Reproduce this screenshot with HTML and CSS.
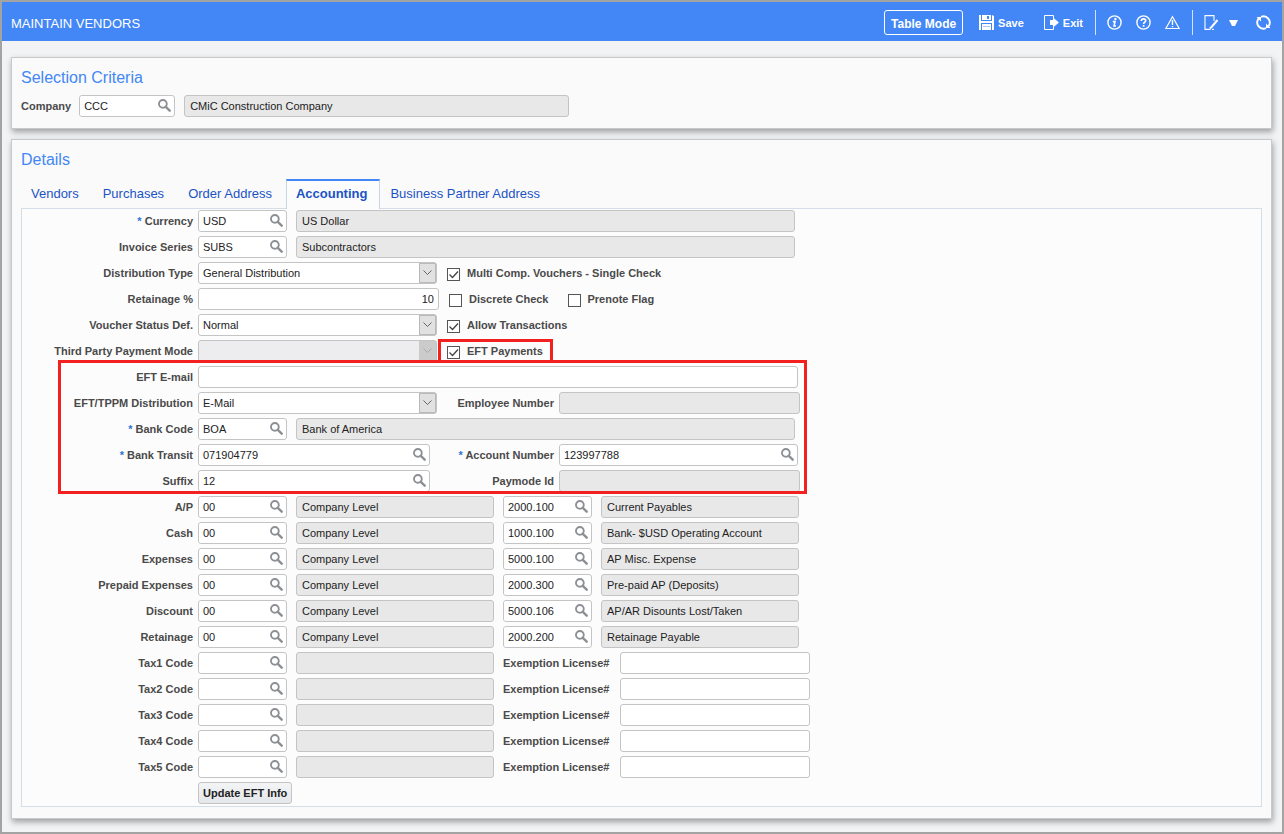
FILE: index.html
```html
<!DOCTYPE html>
<html lang="en">
<head>
    <meta charset="UTF-8">
    <meta name="viewport" content="width=device-width, initial-scale=1.0">
    <title>Maintain Vendors</title>
    <link rel="stylesheet" href="styles.css">
</head>
<body>

<!-- Shared icon -->
<svg class="icon-defs" width="0" height="0" aria-hidden="true">
    <symbol id="icon-search" viewBox="0 0 12 12">
        <circle cx="4.5" cy="4.5" r="3.6" fill="none" stroke="#8c9095" stroke-width="1.7"/>
        <path d="M7.2 7.2L10.8 10.8" stroke="#8c9095" stroke-width="2.2" stroke-linecap="round"/>
    </symbol>
</svg>

<header class="app-header">
    <h1>MAINTAIN VENDORS</h1>
    <div class="toolbar">
        <button type="button" class="table-mode">Table Mode</button>
        <button type="button" class="tool save">
            <svg width="15" height="15" viewBox="0 0 15 15"><path d="M0 0H2V6H13V0L15 1V15H0Z" fill="#fff"/><path d="M3 0H12V5H3Z" fill="#fff"/><path d="M8 1H10V4H8Z" fill="#4287f5"/><path d="M2 8H13V9H2Z M2 8H3V15H2Z M12 8H13V15H12Z" fill="#4287f5"/><path d="M4 11.5H11" stroke="#a9c8fb"/></svg>
            Save
        </button>
        <button type="button" class="tool exit">
            <svg width="15" height="15" viewBox="0 0 15 15"><path d="M9.5 3V.5H.5V14.5H9.5V12" fill="none" stroke="#fff"/><path d="M6 5H9V2.5L15 7.5L9 12.500V10H6Z" fill="#fff"/></svg>
            Exit
        </button>
        <span class="divider"></span>
        <button type="button" class="tool" aria-label="Information">
            <svg width="15" height="15" viewBox="0 0 15 15"><circle cx="7.5" cy="7.5" r="6.6" fill="none" stroke="#fff" stroke-width="1.4"/><circle cx="8.4" cy="4" r="1.200" fill="#fff"/><path d="M5.8 6.600H8L7 11H9" fill="none" stroke="#fff" stroke-width="1.6"/></svg>
        </button>
        <button type="button" class="tool" aria-label="Help">
            <svg width="15" height="15" viewBox="0 0 15 15"><circle cx="7.5" cy="7.5" r="6.6" fill="none" stroke="#fff" stroke-width="1.4"/><path d="M5.3 6C5.3 3.2 9.7 3.2 9.7 5.7C9.7 7.2 7.6 7.2 7.6 9" fill="none" stroke="#fff" stroke-width="1.7"/><path d="M6.700 10H8.500V11.700H6.700Z" fill="#fff"/></svg>
        </button>
        <button type="button" class="tool" aria-label="Warnings">
            <svg width="15" height="15" viewBox="0 0 15 15"><path d="M7.5 1.8L14.2 13.5H.8Z" fill="none" stroke="#fff" stroke-width="1.2"/><path d="M7.5 5V10M7.5 11V12.3" stroke="#fff" stroke-width="1.4"/></svg>
        </button>
        <span class="divider"></span>
        <button type="button" class="tool" aria-label="Edit">
            <svg width="15" height="15" viewBox="0 0 15 15"><path d="M10 6V.6H1V14.400H6.500" fill="none" stroke="#fff" stroke-width="1.1"/><path d="M13.500 5L8 11.5L6 13.5" fill="none" stroke="#fff" stroke-width="2"/><path d="M8 14.400H10" stroke="#fff"/></svg>
        </button>
        <button type="button" class="tool caret" aria-label="More">
            <svg width="9" height="15" viewBox="0 0 9 15"><path d="M0 5H9L6 11H3Z" fill="#fff"/></svg>
        </button>
        <button type="button" class="tool refresh" aria-label="Refresh">
            <svg width="15" height="15" viewBox="0 0 15 15"><path d="M5 1.9A6.200 6.200 0 0 1 12.600 11.100M10 13.100A6.200 6.200 0 0 1 2.400 3.900" fill="none" stroke="#fff" stroke-width="1.900"/><path d="M.5 2H5V6.500Z M14.500 13H10V8.500Z" fill="#fff"/></svg>
        </button>
    </div>
</header>

<main>
    <section class="panel">
        <h2>Selection Criteria</h2>
        <div class="criteria">
            <label for="company">Company</label>
            <div class="group">
                <span class="lookup company"><input type="text" id="company" value="CCC"><button type="button" aria-label="Find company"><svg><use href="#icon-search"/></svg></button></span>
                <input type="text" class="company-name" value="CMiC Construction Company" aria-label="Company name" readonly>
            </div>
        </div>
    </section>

    <section class="panel">
        <h2>Details</h2>
        <nav class="tabs">
            <a href="#vendors">Vendors</a>
            <a href="#purchases">Purchases</a>
            <a href="#order-address">Order Address</a>
            <a href="#accounting" class="active">Accounting</a>
            <a href="#partner-address">Business Partner Address</a>
        </nav>
        <form class="tab-content" id="accounting">
            <div class="row">
                <label for="currency"><span class="required">*</span> Currency</label>
                <div class="group">
                    <span class="lookup"><input type="text" id="currency" value="USD"><button type="button" aria-label="Find currency"><svg><use href="#icon-search"/></svg></button></span>
                    <input type="text" class="wide" value="US Dollar" aria-label="Currency name" readonly>
                </div>
            </div>
            <div class="row">
                <label for="invoice-series">Invoice Series</label>
                <div class="group">
                    <span class="lookup"><input type="text" id="invoice-series" value="SUBS"><button type="button" aria-label="Find invoice series"><svg><use href="#icon-search"/></svg></button></span>
                    <input type="text" class="wide" value="Subcontractors" aria-label="Invoice series name" readonly>
                </div>
            </div>
            <div class="row">
                <label for="distribution-type">Distribution Type</label>
                <div class="group">
                    <select id="distribution-type"><option>General Distribution</option></select>
                    <label class="check"><input type="checkbox" checked> Multi Comp. Vouchers - Single Check</label>
                </div>
            </div>
            <div class="row">
                <label for="retainage-pct">Retainage %</label>
                <div class="group">
                    <input type="text" id="retainage-pct" class="medium number" value="10">
                    <label class="check"><input type="checkbox"> Discrete Check</label>
                    <label class="check"><input type="checkbox"> Prenote Flag</label>
                </div>
            </div>
            <div class="row">
                <label for="voucher-status">Voucher Status Def.</label>
                <div class="group">
                    <select id="voucher-status"><option>Normal</option></select>
                    <label class="check"><input type="checkbox" checked> Allow Transactions</label>
                </div>
            </div>
            <div class="row">
                <label for="payment-mode">Third Party Payment Mode</label>
                <div class="group">
                    <select id="payment-mode" disabled><option></option></select>
                    <label class="check highlighted"><input type="checkbox" checked> EFT Payments</label>
                </div>
            </div>

            <!-- EFT fields -->
            <div class="eft-fields">
                <div class="row">
                    <label for="eft-email">EFT E-mail</label>
                    <input type="text" id="eft-email" class="email">
                </div>
                <div class="row">
                    <label for="eft-distribution">EFT/TPPM Distribution</label>
                    <div class="first-field"><select id="eft-distribution"><option>E-Mail</option></select></div>
                    <label for="employee-number" class="second">Employee Number</label>
                    <input type="text" id="employee-number" class="medium" readonly>
                </div>
                <div class="row">
                    <label for="bank-code"><span class="required">*</span> Bank Code</label>
                    <div class="group">
                        <span class="lookup"><input type="text" id="bank-code" value="BOA"><button type="button" aria-label="Find bank"><svg><use href="#icon-search"/></svg></button></span>
                        <input type="text" class="wide" value="Bank of America" aria-label="Bank name" readonly>
                    </div>
                </div>
                <div class="row">
                    <label for="bank-transit"><span class="required">*</span> Bank Transit</label>
                    <div class="first-field"><span class="lookup transit"><input type="text" id="bank-transit" value="071904779"><button type="button" aria-label="Find bank transit"><svg><use href="#icon-search"/></svg></button></span></div>
                    <label for="account-number" class="second"><span class="required">*</span> Account Number</label>
                    <span class="lookup account"><input type="text" id="account-number" value="123997788"><button type="button" aria-label="Find account number"><svg><use href="#icon-search"/></svg></button></span>
                </div>
                <div class="row">
                    <label for="suffix">Suffix</label>
                    <div class="first-field"><span class="lookup transit"><input type="text" id="suffix" value="12"><button type="button" aria-label="Find suffix"><svg><use href="#icon-search"/></svg></button></span></div>
                    <label for="paymode-id" class="second">Paymode Id</label>
                    <input type="text" id="paymode-id" class="medium" readonly>
                </div>
            </div>

            <!-- G/L accounts -->
            <div class="row">
                <label for="ap">A/P</label>
                <div class="group">
                    <span class="lookup"><input type="text" id="ap" value="00"><button type="button" aria-label="Find A/P level"><svg><use href="#icon-search"/></svg></button></span>
                    <input type="text" class="name" value="Company Level" aria-label="A/P level" readonly>
                    <span class="lookup"><input type="text" value="2000.100" aria-label="A/P account"><button type="button" aria-label="Find A/P account"><svg><use href="#icon-search"/></svg></button></span>
                    <input type="text" class="name" value="Current Payables" aria-label="A/P account name" readonly>
                </div>
            </div>
            <div class="row">
                <label for="cash">Cash</label>
                <div class="group">
                    <span class="lookup"><input type="text" id="cash" value="00"><button type="button" aria-label="Find cash level"><svg><use href="#icon-search"/></svg></button></span>
                    <input type="text" class="name" value="Company Level" aria-label="Cash level" readonly>
                    <span class="lookup"><input type="text" value="1000.100" aria-label="Cash account"><button type="button" aria-label="Find cash account"><svg><use href="#icon-search"/></svg></button></span>
                    <input type="text" class="name" value="Bank- $USD Operating Account" aria-label="Cash account name" readonly>
                </div>
            </div>
            <div class="row">
                <label for="expenses">Expenses</label>
                <div class="group">
                    <span class="lookup"><input type="text" id="expenses" value="00"><button type="button" aria-label="Find expenses level"><svg><use href="#icon-search"/></svg></button></span>
                    <input type="text" class="name" value="Company Level" aria-label="Expenses level" readonly>
                    <span class="lookup"><input type="text" value="5000.100" aria-label="Expenses account"><button type="button" aria-label="Find expenses account"><svg><use href="#icon-search"/></svg></button></span>
                    <input type="text" class="name" value="AP Misc. Expense" aria-label="Expenses account name" readonly>
                </div>
            </div>
            <div class="row">
                <label for="prepaid">Prepaid Expenses</label>
                <div class="group">
                    <span class="lookup"><input type="text" id="prepaid" value="00"><button type="button" aria-label="Find prepaid level"><svg><use href="#icon-search"/></svg></button></span>
                    <input type="text" class="name" value="Company Level" aria-label="Prepaid level" readonly>
                    <span class="lookup"><input type="text" value="2000.300" aria-label="Prepaid account"><button type="button" aria-label="Find prepaid account"><svg><use href="#icon-search"/></svg></button></span>
                    <input type="text" class="name" value="Pre-paid AP (Deposits)" aria-label="Prepaid account name" readonly>
                </div>
            </div>
            <div class="row">
                <label for="discount">Discount</label>
                <div class="group">
                    <span class="lookup"><input type="text" id="discount" value="00"><button type="button" aria-label="Find discount level"><svg><use href="#icon-search"/></svg></button></span>
                    <input type="text" class="name" value="Company Level" aria-label="Discount level" readonly>
                    <span class="lookup"><input type="text" value="5000.106" aria-label="Discount account"><button type="button" aria-label="Find discount account"><svg><use href="#icon-search"/></svg></button></span>
                    <input type="text" class="name" value="AP/AR Disounts Lost/Taken" aria-label="Discount account name" readonly>
                </div>
            </div>
            <div class="row">
                <label for="retainage">Retainage</label>
                <div class="group">
                    <span class="lookup"><input type="text" id="retainage" value="00"><button type="button" aria-label="Find retainage level"><svg><use href="#icon-search"/></svg></button></span>
                    <input type="text" class="name" value="Company Level" aria-label="Retainage level" readonly>
                    <span class="lookup"><input type="text" value="2000.200" aria-label="Retainage account"><button type="button" aria-label="Find retainage account"><svg><use href="#icon-search"/></svg></button></span>
                    <input type="text" class="name" value="Retainage Payable" aria-label="Retainage account name" readonly>
                </div>
            </div>

            <!-- Tax codes -->
            <div class="row">
                <label for="tax1">Tax1 Code</label>
                <div class="group">
                    <span class="lookup"><input type="text" id="tax1"><button type="button" aria-label="Find tax 1"><svg><use href="#icon-search"/></svg></button></span>
                    <input type="text" class="name" aria-label="Tax 1 name" readonly>
                    <label for="license1" class="license">Exemption License#</label>
                </div>
                <input type="text" id="license1" class="license-field">
            </div>
            <div class="row">
                <label for="tax2">Tax2 Code</label>
                <div class="group">
                    <span class="lookup"><input type="text" id="tax2"><button type="button" aria-label="Find tax 2"><svg><use href="#icon-search"/></svg></button></span>
                    <input type="text" class="name" aria-label="Tax 2 name" readonly>
                    <label for="license2" class="license">Exemption License#</label>
                </div>
                <input type="text" id="license2" class="license-field">
            </div>
            <div class="row">
                <label for="tax3">Tax3 Code</label>
                <div class="group">
                    <span class="lookup"><input type="text" id="tax3"><button type="button" aria-label="Find tax 3"><svg><use href="#icon-search"/></svg></button></span>
                    <input type="text" class="name" aria-label="Tax 3 name" readonly>
                    <label for="license3" class="license">Exemption License#</label>
                </div>
                <input type="text" id="license3" class="license-field">
            </div>
            <div class="row">
                <label for="tax4">Tax4 Code</label>
                <div class="group">
                    <span class="lookup"><input type="text" id="tax4"><button type="button" aria-label="Find tax 4"><svg><use href="#icon-search"/></svg></button></span>
                    <input type="text" class="name" aria-label="Tax 4 name" readonly>
                    <label for="license4" class="license">Exemption License#</label>
                </div>
                <input type="text" id="license4" class="license-field">
            </div>
            <div class="row">
                <label for="tax5">Tax5 Code</label>
                <div class="group">
                    <span class="lookup"><input type="text" id="tax5"><button type="button" aria-label="Find tax 5"><svg><use href="#icon-search"/></svg></button></span>
                    <input type="text" class="name" aria-label="Tax 5 name" readonly>
                    <label for="license5" class="license">Exemption License#</label>
                </div>
                <input type="text" id="license5" class="license-field">
            </div>
            <div class="row actions">
                <button type="button" class="update">Update EFT Info</button>
            </div>
        </form>
    </section>
</main>

</body>
</html>
```
FILE: styles.css
```css
*,
*::after {
    box-sizing: border-box;
}
body {
    margin: 0;
    min-height: 100vh;
    border: 2px solid #a3a3a3;
    background-color: #f1f3f5;
    font-family: "Liberation Sans", Arial, sans-serif;
    font-size: 11px;
    color: #333;
}
.icon-defs {
    position: absolute;
}
input,
select,
button {
    font-family: inherit;
    font-size: 11px;
    color: #222;
}
button {
    cursor: pointer;
}

/* Header */
.app-header {
    display: flex;
    align-items: center;
    justify-content: space-between;
    height: 39px;
    padding: 0 11px 0 9px;
    background-color: #4287f5;
    color: #fff;
}
.app-header h1 {
    margin: 0;
    padding-top: 4px;
    font-size: 13px;
    font-weight: normal;
}
.toolbar {
    display: flex;
    align-items: center;
    gap: 14px;
    padding-top: 2px;
}
.table-mode {
    height: 25px;
    width: 79px;
    padding: 2px 0 0;
    border: 1px solid #fff;
    border-radius: 3px;
    background: none;
    color: #fff;
    font-size: 12px;
    font-weight: bold;
}
.tool {
    display: flex;
    align-items: center;
    gap: 4px;
    padding: 0;
    border: 0;
    background: none;
    color: #fff;
    font-weight: bold;
}
.save {
    margin-left: 2px;
}
.exit {
    margin-left: 6px;
}
.toolbar .divider {
    width: 1px;
    height: 25px;
    margin: 0 -3px 0 -2px;
    background-color: #d5e4fd;
}
.caret {
    margin-left: -4px;
}
.refresh {
    margin-left: 4px;
}

/* Panels */
main {
    display: flex;
    flex-direction: column;
    gap: 10px;
    padding: 16px 10px 13px 9px;
}
.panel {
    padding: 10px 9px 11px;
    border: 1px solid #c8c9cb;
    background-color: #fafafa;
    box-shadow: 1px 3px 6px rgba(0, 0, 0, 0.35);
}
.panel h2 {
    margin: 0;
    font-size: 16px;
    line-height: 20px;
    font-weight: normal;
    color: #4287f5;
}
.criteria {
    display: flex;
    align-items: center;
    gap: 8px;
    margin-top: 7px;
}
label {
    font-weight: bold;
    color: #4a4a4a;
    white-space: nowrap;
}

/* Tabs */
.tabs {
    display: flex;
    margin-top: 9px;
}
.tabs a {
    height: 29px;
    padding: 0 14px 0 10px;
    line-height: 29px;
    font-size: 13px;
    color: #1a53c6;
    text-decoration: none;
}
.tabs .active {
    position: relative;
    height: 30px;
    margin-bottom: -1px;
    padding: 0 12px 0 9px;
    border: 1px solid #c9d6e2;
    border-top: 2px solid #4287f5;
    border-bottom: 0;
    line-height: 26px;
    background-color: #fcfcfc;
    font-weight: bold;
}
.tab-content {
    display: flex;
    flex-direction: column;
    gap: 4px;
    padding: 1px 0 2px;
    border: 1px solid #d3dee8;
    background-color: #fcfcfc;
}

/* Form rows */
.row {
    display: flex;
    align-items: center;
    gap: 5px;
    height: 22px;
}
.row > label {
    width: 171px;
    text-align: right;
}
.row > label.second {
    width: 110px;
}
.required {
    color: #2f74d8;
}
.group {
    display: flex;
    align-items: center;
    gap: 9px;
}
.first-field {
    display: flex;
    width: 241px;
}
input[type="text"],
select {
    height: 22px;
    padding: 0 4px;
    border: 1px solid #c4c4c4;
    border-radius: 3px;
    background-color: #fff;
    outline: none;
}
input[type="text"]:read-only {
    padding: 0 5px;
    background-color: #e8e8e8;
}
.wide {
    width: 499px;
}
.medium {
    width: 241px;
}
.number {
    text-align: right;
}
.email {
    width: 600px;
}
.name {
    width: 198px;
}
.license {
    width: 112px;
}
.license-field {
    width: 190px;
}
.company-name {
    width: 385px;
}

/* Text box with a search button */
.lookup {
    display: flex;
    width: 89px;
    height: 22px;
    border: 1px solid #c4c4c4;
    border-radius: 3px;
    background-color: #fff;
}
.lookup input[type="text"] {
    flex: 1;
    min-width: 0;
    height: 20px;
    border: 0;
}
.lookup button {
    display: flex;
    align-items: center;
    padding: 0 3px 1px;
    border: 0;
    background: none;
}
.lookup svg {
    width: 13px;
    height: 13px;
}
.lookup.company {
    width: 96px;
}
.lookup.transit {
    width: 232px;
}
.lookup.account {
    width: 239px;
}

select {
    width: 239px;
    appearance: none;
    opacity: 1;
    background-image: url("data:image/svg+xml,%3Csvg xmlns='http://www.w3.org/2000/svg' width='17' height='20'%3E%3Crect x='.5' y='.5' width='16' height='19' fill='%23e1e1e1' stroke='%23b9b9b9'/%3E%3Cpath d='M4.5 7.5L8.5 11.5L12.5 7.5' fill='none' stroke='%23666'/%3E%3C/svg%3E");
    background-repeat: no-repeat;
    background-position: right center;
}
select:disabled {
    background-color: #ededef;
    background-image: url("data:image/svg+xml,%3Csvg xmlns='http://www.w3.org/2000/svg' width='17' height='20'%3E%3Crect width='17' height='20' fill='%23cbcbcb'/%3E%3Cpath d='M4.5 7.5L8.5 11.5L12.5 7.5' fill='none' stroke='%23aaa'/%3E%3C/svg%3E");
}

/* Check boxes */
.check {
    position: relative;
    display: flex;
    align-items: center;
    gap: 7px;
    margin-left: 1px;
}
.check + .check {
    margin-left: 10px;
}
.check input {
    appearance: none;
    width: 13px;
    height: 13px;
    margin: 2px 0 0;
    border: 1px solid #555;
    background-color: #fff;
}
.check input:checked {
    background-image: url("data:image/svg+xml,%3Csvg xmlns='http://www.w3.org/2000/svg' width='11' height='11'%3E%3Cpath d='M1.5 5.5L4.5 8.5L10 2.5' fill='none' stroke='%23444' stroke-width='1.3'/%3E%3C/svg%3E");
}

/* Red callout frames */
.highlighted::after {
    content: "";
    position: absolute;
    top: -5px;
    right: -10px;
    bottom: -4px;
    left: -9px;
    border: 3px solid #f32020;
    border-bottom: 0;
}
.eft-fields {
    position: relative;
    display: flex;
    flex-direction: column;
    gap: 4px;
}
.eft-fields::after {
    content: "";
    position: absolute;
    top: -6px;
    bottom: -2px;
    left: 36px;
    width: 749px;
    border: 3px solid #f32020;
    pointer-events: none;
}

.actions {
    padding-left: 176px;
}
.update {
    height: 22px;
    padding: 0 4px;
    border: 1px solid #c4c4c4;
    border-radius: 3px;
    background: linear-gradient(#f3f4f5, #e4e7ea);
    font-weight: bold;
}
```
